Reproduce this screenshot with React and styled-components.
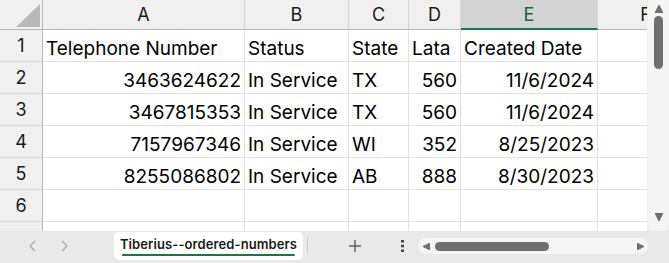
import React from "react";
import styled, { createGlobalStyle } from "styled-components";

const Global = createGlobalStyle`
  html, body { margin: 0; padding: 0; background: #e9e9e9; overflow: hidden; }
  * { box-sizing: border-box; }
`;

const Frame = styled.div`
  width: 669px;
  height: 263px;
  display: flex;
  flex-direction: column;
  background: #e9e9e9;
  font-family: Inter, "Liberation Sans", sans-serif;
`;

const Top = styled.div`
  height: 231px;
  display: flex;
  background: #f0f0f0;
`;

const GridWrap = styled.div`
  width: 647px;
  overflow: hidden;
  background: #fff;
`;

const Grid = styled.div`
  display: grid;
  grid-template-columns: 43px 202px 104px 60px 52px 137px 96px;
  grid-template-rows: 30px repeat(7, 32px);
`;

const Corner = styled.div`
  background: #f0f0f0;
  border-right: 1px solid #b8b8b8;
  border-bottom: 1px solid #b8b8b8;
  position: relative;
`;

const CornerTri = styled.svg`
  position: absolute;
  left: 16px;
  top: 4px;
`;

const ColHead = styled.div`
  background: ${(p) => (p.$sel ? "#d3d3d3" : "#f0f0f0")};
  color: ${(p) => (p.$sel ? "#0f6a35" : "#1a1a1a")};
  border-right: 1px solid #d6d6d6;
  border-bottom: ${(p) => (p.$sel ? "2px solid #157a42" : "1px solid #b8b8b8")};
  display: flex;
  align-items: center;
  justify-content: center;
  font-size: 18px;
  padding-top: ${(p) => (p.$sel ? "1px" : "0")};
  overflow: hidden;
`;

const RowHead = styled.div`
  background: #f0f0f0;
  color: #1a1a1a;
  border-right: 1px solid #b8b8b8;
  border-bottom: 1px solid #d6d6d6;
  display: flex;
  align-items: center;
  justify-content: center;
  font-size: 18px;
`;

const Cell = styled.div`
  border-right: 1px solid #e1e1e1;
  border-bottom: 1px solid #e1e1e1;
  display: flex;
  align-items: flex-end;
  justify-content: ${(p) => (p.$num ? "flex-end" : "flex-start")};
  padding: 0 3px 0 3px;
  font-size: 19px;
  line-height: 24px;
  color: #000;
  white-space: nowrap;
`;

const VScroll = styled.div`
  width: 21px;
  margin-left: 1px;
  background: #f5f5f5;
  border-radius: 0 0 9px 9px;
  display: flex;
  flex-direction: column;
  align-items: center;
  padding: 5px 0 10px 0;
`;

const VThumb = styled.div`
  width: 9px;
  height: 53px;
  background: #6f6f6f;
  border-radius: 5px;
  margin-top: 3px;
`;

const Spacer = styled.div`
  flex: 1;
`;

const Bottom = styled.div`
  height: 32px;
  display: flex;
  align-items: flex-start;
`;

const NavBtn = styled.div`
  width: 20px;
  height: 30px;
  margin-left: ${(p) => p.$ml}px;
  display: flex;
  align-items: center;
  justify-content: center;
`;

const Tab = styled.div`
  margin-top: 1px;
  margin-left: 40px;
  width: 189px;
  height: 28px;
  background: #fff;
  border-radius: 5px;
  display: flex;
  flex-direction: column;
  align-items: center;
  padding-top: 4px;
`;

const TabLabel = styled.div`
  font-weight: 600;
  font-size: 13px;
  line-height: 16px;
  color: #1a1a1a;
  letter-spacing: 0.1px;
`;

const TabLine = styled.div`
  width: 173px;
  height: 2px;
  border-radius: 1px;
  background: #157a42;
  margin-top: 2px;
`;

const Sep = styled.div`
  width: 1px;
  height: 16px;
  background: #c9c9c9;
  margin: 7px 0 0 4px;
`;

const IconBtn = styled.div`
  width: 20px;
  height: 30px;
  margin-left: ${(p) => p.$ml}px;
  display: flex;
  align-items: center;
  justify-content: center;
`;

const HScroll = styled.div`
  margin: 7px 0 0 6px;
  width: 230px;
  height: 16px;
  background: #f6f6f6;
  border-radius: 8px;
  display: flex;
  align-items: center;
  padding: 0 4px 0 5px;
`;

const HThumb = styled.div`
  width: 114px;
  height: 9px;
  background: #6f6f6f;
  border-radius: 5px;
  margin-left: 5px;
`;

const cols = ["A", "B", "C", "D", "E", "F"];
const rows = [
  ["Telephone Number", "Status", "State", "Lata", "Created Date", ""],
  ["3463624622", "In Service", "TX", "560", "11/6/2024", ""],
  ["3467815353", "In Service", "TX", "560", "11/6/2024", ""],
  ["7157967346", "In Service", "WI", "352", "8/25/2023", ""],
  ["8255086802", "In Service", "AB", "888", "8/30/2023", ""],
  ["", "", "", "", "", ""],
  ["", "", "", "", "", ""],
];

const isNum = (r, c) => r > 0 && (c === 0 || c === 3 || c === 4);

const Tri = ({ dir, size = 7, color = "#6f6f6f" }) => {
  const pts = {
    up: `0,${size} ${size},${size} ${size / 2},0`,
    down: `0,0 ${size},0 ${size / 2},${size}`,
    left: `${size},0 ${size},${size} 0,${size / 2}`,
    right: `0,0 0,${size} ${size},${size / 2}`,
  }[dir];
  return (
    <svg width={size} height={size} viewBox={`0 0 ${size} ${size}`}>
      <polygon points={pts} fill={color} strokeLinejoin="round" stroke={color} strokeWidth="1" />
    </svg>
  );
};

export default function App() {
  return (
    <>
      <Global />
      <Frame>
        <Top>
          <GridWrap>
            <Grid>
              <Corner>
                <CornerTri width="24" height="23" viewBox="0 0 24 23">
                  <polygon points="24,0 24,23 0,23" fill="#b8b8b8" />
                </CornerTri>
              </Corner>
              {cols.map((c) => (
                <ColHead key={c} $sel={c === "E"}>{c}</ColHead>
              ))}
              {rows.map((row, r) => (
                <React.Fragment key={r}>
                  <RowHead>{r < 6 ? r + 1 : ""}</RowHead>
                  {row.map((v, c) => (
                    <Cell key={c} $num={isNum(r, c)}>{v}</Cell>
                  ))}
                </React.Fragment>
              ))}
            </Grid>
          </GridWrap>
          <VScroll>
            <Tri dir="up" size={8} />
            <VThumb />
            <Spacer />
            <Tri dir="down" size={8} />
          </VScroll>
        </Top>
        <Bottom>
          <NavBtn $ml={22}>
            <svg width="7" height="12" viewBox="0 0 7 12">
              <polyline points="6,1 1,6 6,11" fill="none" stroke="#a8a8a8" strokeWidth="1.2" />
            </svg>
          </NavBtn>
          <NavBtn $ml={12}>
            <svg width="7" height="12" viewBox="0 0 7 12">
              <polyline points="1,1 6,6 1,11" fill="none" stroke="#a8a8a8" strokeWidth="1.2" />
            </svg>
          </NavBtn>
          <Tab>
            <TabLabel>Tiberius--ordered-numbers</TabLabel>
            <TabLine />
          </Tab>
          <Sep />
          <IconBtn $ml={37}>
            <svg width="12" height="12" viewBox="0 0 12 12">
              <line x1="6" y1="0" x2="6" y2="12" stroke="#444" strokeWidth="1.2" />
              <line x1="0" y1="6" x2="12" y2="6" stroke="#444" strokeWidth="1.2" />
            </svg>
          </IconBtn>
          <IconBtn $ml={27}>
            <svg width="3" height="12" viewBox="0 0 3 12">
              <rect x="0" y="0" width="3" height="2.5" fill="#444" />
              <rect x="0" y="4.75" width="3" height="2.5" fill="#444" />
              <rect x="0" y="9.5" width="3" height="2.5" fill="#444" />
            </svg>
          </IconBtn>
          <HScroll>
            <Tri dir="left" size={7} />
            <HThumb />
            <Spacer />
            <Tri dir="right" size={7} />
          </HScroll>
        </Bottom>
      </Frame>
    </>
  );
}
